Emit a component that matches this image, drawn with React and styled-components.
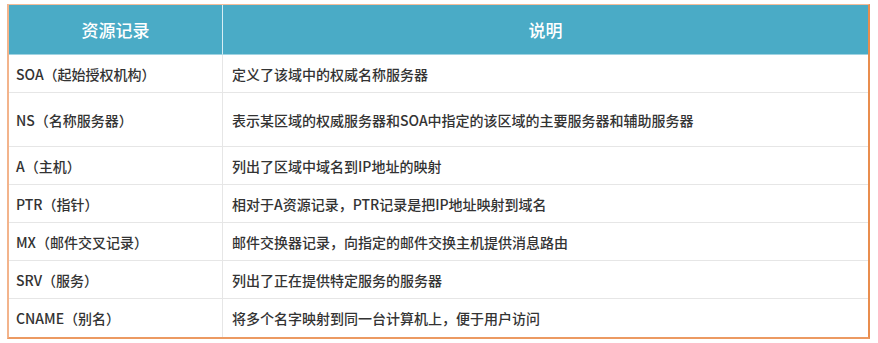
import React from 'react'
import styled, { createGlobalStyle } from 'styled-components'

const GlobalStyle = createGlobalStyle`
    body{
        margin:0;
        background:#ffffff;
        font-family:"Noto Sans CJK SC", "Noto Sans", sans-serif;
    }
`

const records = [
    { name: "SOA（起始授权机构）", desc: "定义了该域中的权威名称服务器" },
    { name: "NS（名称服务器）", desc: "表示某区域的权威服务器和SOA中指定的该区域的主要服务器和辅助服务器", tall: true },
    { name: "A（主机）", desc: "列出了区域中域名到IP地址的映射" },
    { name: "PTR（指针）", desc: "相对于A资源记录，PTR记录是把IP地址映射到域名" },
    { name: "MX（邮件交叉记录）", desc: "邮件交换器记录，向指定的邮件交换主机提供消息路由" },
    { name: "SRV（服务）", desc: "列出了正在提供特定服务的服务器" },
    { name: "CNAME（别名）", desc: "将多个名字映射到同一台计算机上，便于用户访问" },
]

function App() {
    return (
        <>
            <GlobalStyle />
            <Page>
                <Table>
                    <colgroup>
                        <col style={{ width: "214px" }} />
                        <col />
                    </colgroup>
                    <thead>
                        <tr>
                            <HeadCell>资源记录</HeadCell>
                            <HeadCell>说明</HeadCell>
                        </tr>
                    </thead>
                    <tbody>
                        {records.map((r) => (
                            <Row key={r.name} tall={r.tall}>
                                <Cell first>{r.name}</Cell>
                                <Cell>{r.desc}</Cell>
                            </Row>
                        ))}
                    </tbody>
                </Table>
            </Page>
        </>
    )
}

export default App

const Page = styled.div`
    padding:4px 0 0 7px;
`

const Table = styled.table`
    width:863px;
    border-collapse:separate;
    border-spacing:0;
    table-layout:fixed;
    border-top:1px solid #f3bc98;
    border-left:2px solid #f3b48c;
    border-right:2px solid #e98d4e;
    border-bottom:2px solid #ec9a62;
`

const HeadCell = styled.th`
    height:49px;
    padding:0;
    background:#4aabc6;
    color:#ffffff;
    font-size:17px;
    font-weight:500;
    text-align:center;
    border-bottom:1px solid #9fd3e2;
    &:first-child{
        border-right:1px solid #d7eef4;
    }
`

const Row = styled.tr.withConfig({ shouldForwardProp: (p) => p !== "tall" })`
    height:${(p) => (p.tall ? "54px" : "38px")};
    &:not(:last-child) td{
        border-bottom:1px solid #e6e6e6;
    }
`

const Cell = styled.td.withConfig({ shouldForwardProp: (p) => p !== "first" })`
    padding:0 0 0 ${(p) => (p.first ? "7px" : "9px")};
    color:#333333;
    font-size:14px;
    font-weight:500;
    line-height:20px;
    white-space:nowrap;
    vertical-align:middle;
    border-right:${(p) => (p.first ? "1px solid #e6e6e6" : "none")};
`
